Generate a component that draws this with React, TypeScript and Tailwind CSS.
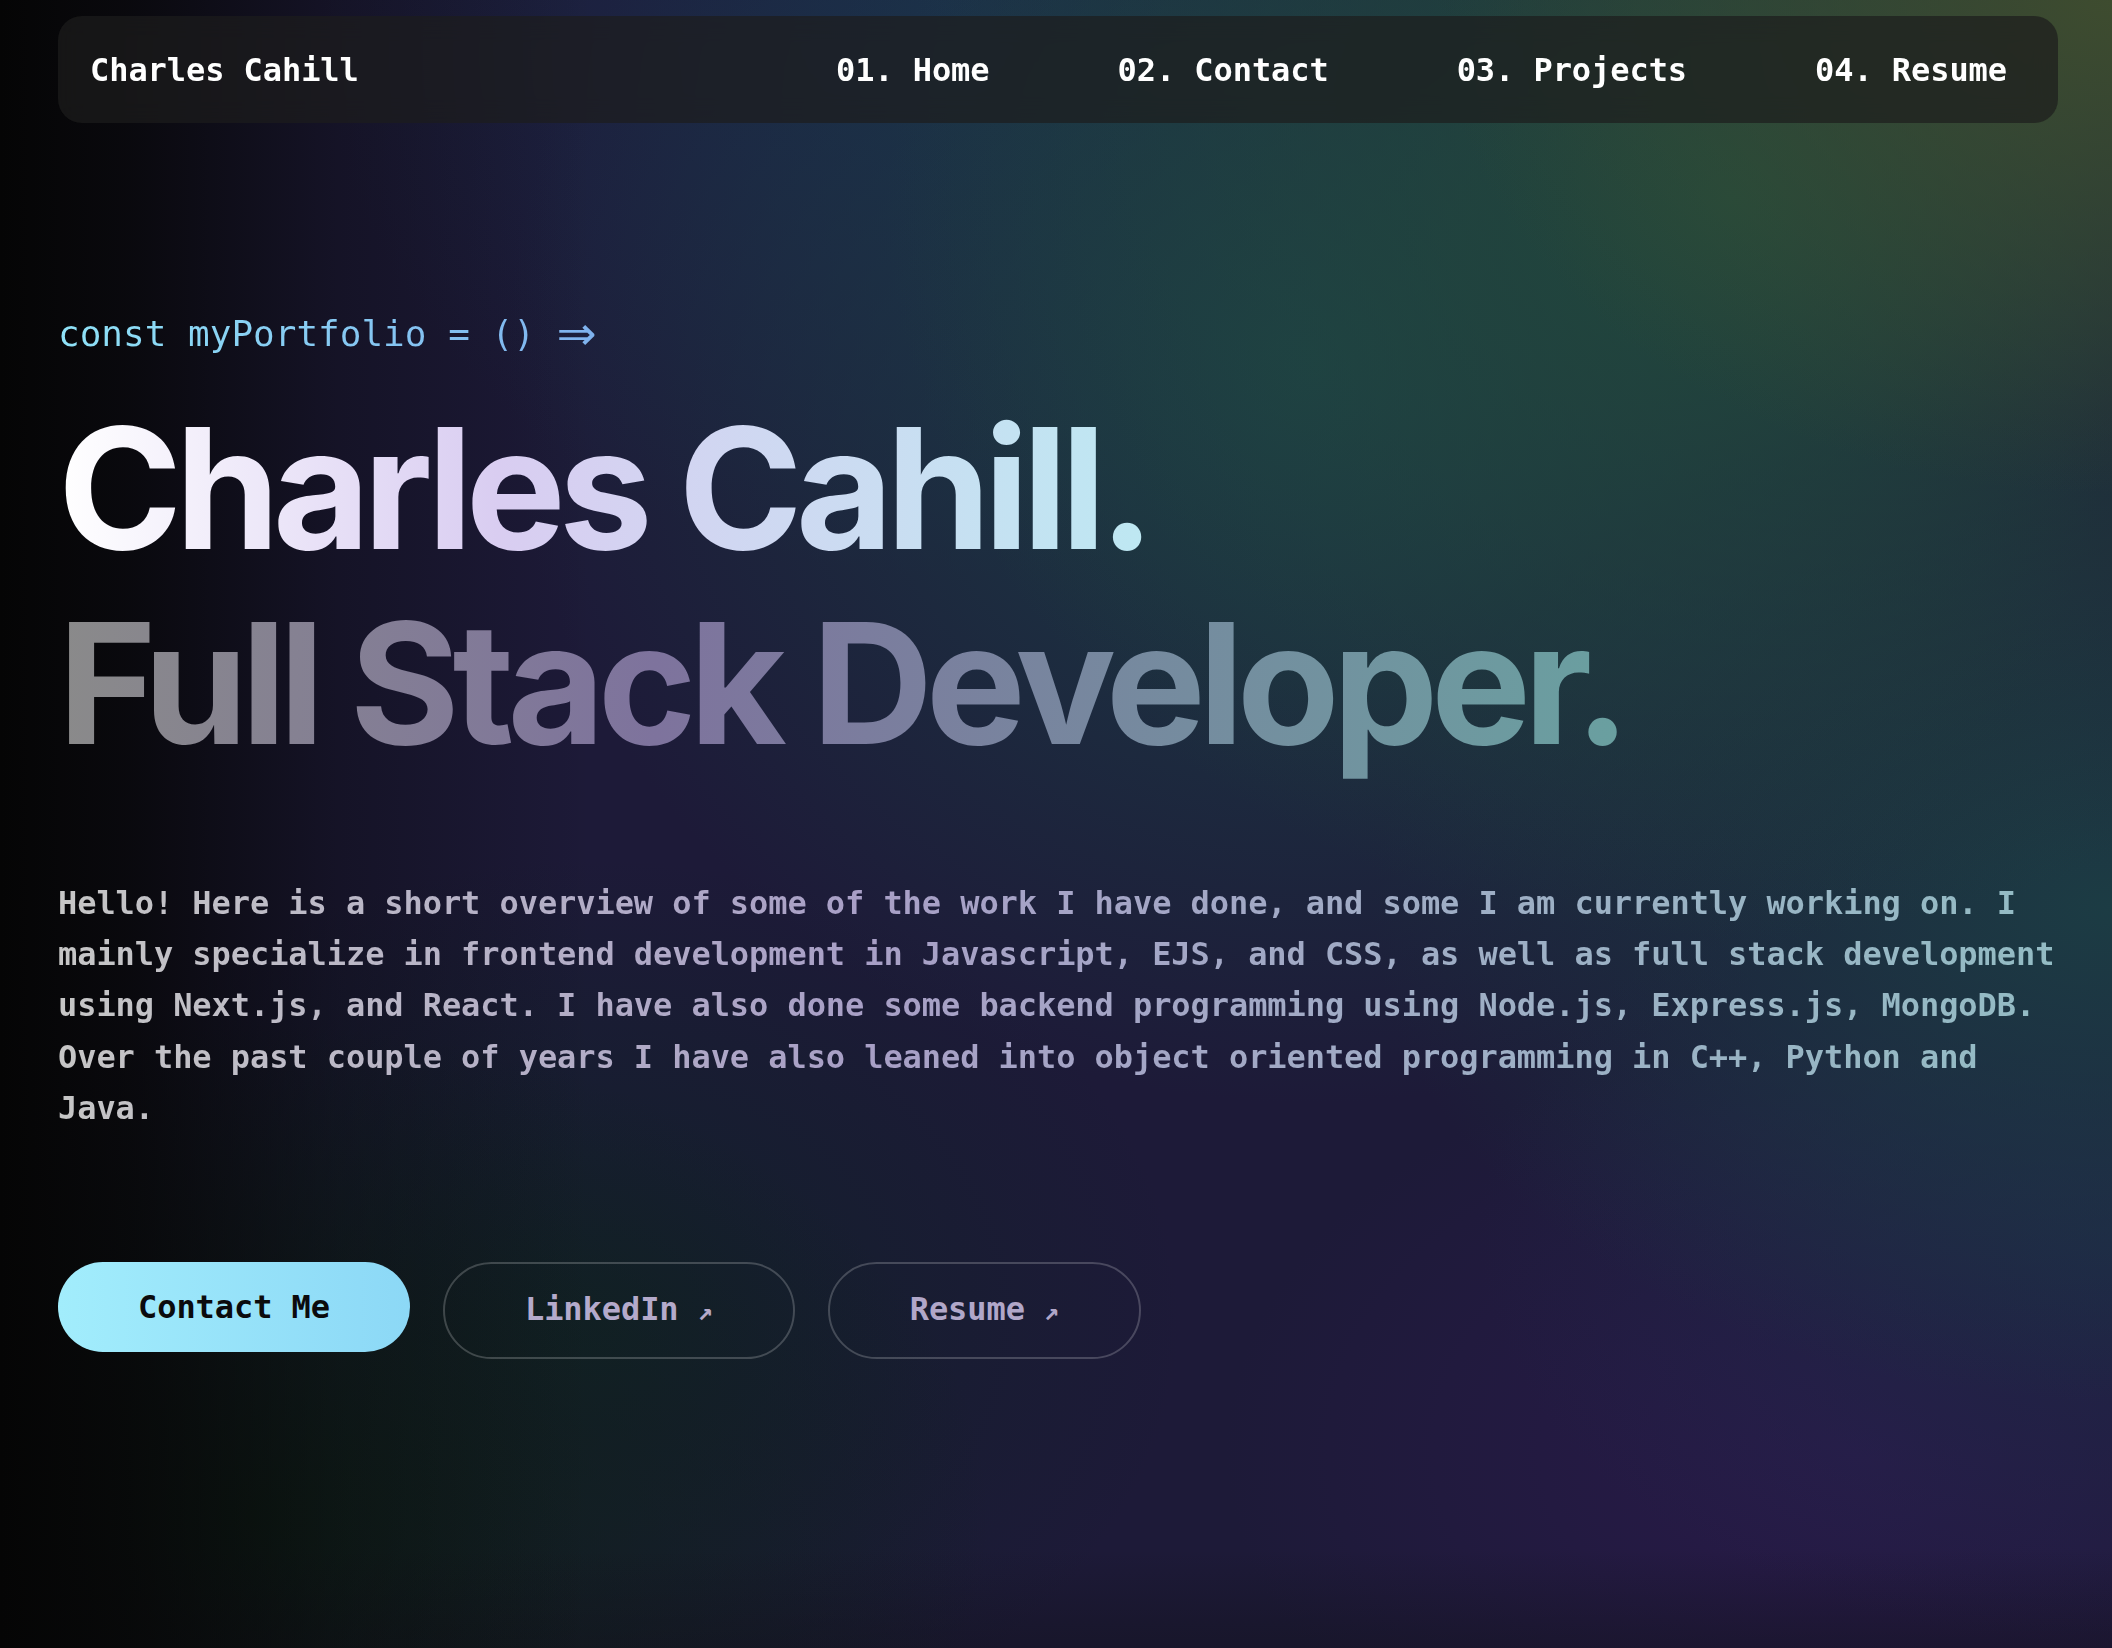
import React from "react";

const mono = "font-['DejaVu_Sans_Mono','Liberation_Mono',monospace]";

function Arrow() {
  return <span className="text-[25px] align-baseline">↗</span>;
}

export default function App() {
  return (
    <div className="relative min-h-screen w-full overflow-hidden bg-[#1d1a38] [background-image:linear-gradient(to_right,#050505_0%,rgba(6,6,6,0.85)_6%,rgba(6,6,6,0.35)_16%,transparent_28%),linear-gradient(to_top,rgba(14,14,18,0.35)_0%,transparent_6%),radial-gradient(ellipse_32%_30%_at_100%_0%,#3e4c2f_0%,transparent_100%),radial-gradient(ellipse_40%_45%_at_82%_12%,#22493c_0%,transparent_100%),radial-gradient(ellipse_38%_45%_at_62%_22%,#1c3d46_0%,transparent_100%),radial-gradient(ellipse_30%_35%_at_45%_0%,#1b2b4a_0%,transparent_100%),radial-gradient(ellipse_35%_30%_at_100%_55%,#1c3c44_0%,transparent_100%),radial-gradient(ellipse_30%_25%_at_100%_75%,#1f2646_0%,transparent_100%),radial-gradient(ellipse_35%_30%_at_12%_92%,#0f1f19_0%,transparent_100%),radial-gradient(ellipse_28%_28%_at_28%_80%,#12202a_0%,transparent_100%),radial-gradient(ellipse_30%_25%_at_88%_88%,#291a4a_0%,transparent_100%)]">
      <header className="pl-[58px] pr-[54px] pt-[16px]">
        <nav
          className={`flex h-[107px] items-center justify-between rounded-[24px] bg-[#1c1c1c]/70 pl-[32px] pr-[51px] backdrop-blur-md ${mono} text-[32px] font-bold tracking-[-0.07px] text-white`}
        >
          <a href="#" className="leading-none">Charles Cahill</a>
          <div className="flex items-center gap-[128px]">
            <a href="#" className="leading-none">01. Home</a>
            <a href="#" className="leading-none">02. Contact</a>
            <a href="#" className="leading-none">03. Projects</a>
            <a href="#" className="leading-none">04. Resume</a>
          </div>
        </nav>
      </header>

      <main className="pl-[58px] pr-[50px] pt-[183px] pb-[200px]">
        <div className={`${mono} text-[36px] leading-[55px]`}>
          <span className="inline-flex items-center bg-linear-to-r from-[#8fe2f7] to-[#7fb2ee] bg-clip-text text-transparent">
            <span className="whitespace-pre">const myPortfolio = () </span>
            <span className="inline-block font-['DejaVu_Sans',sans-serif] text-[48px] leading-[55px]">⇒</span>
          </span>
        </div>

        <h1 className="mt-[30px] font-['Inter',sans-serif] text-[168px] font-bold leading-[195px] tracking-[-0.042em]">
          <span className="block w-fit bg-linear-to-r from-white via-[#d9cdf1] via-40% to-[#bde8f2] bg-clip-text pr-2 text-transparent">
            Charles Cahill.
          </span>
          <span className="block w-fit bg-linear-to-r from-[#8a8a8a] via-[#7e739d] via-38% to-[#69a0a0] bg-clip-text pr-2 tracking-[-0.0436em] text-transparent">
            Full Stack Developer.
          </span>
        </h1>

        <p
          className={`mt-[97px] ${mono} bg-linear-to-r from-[#c6c6c6] via-[#a89fc6] via-40% to-[#93bcc4] bg-clip-text text-[32px] font-bold leading-[51.2px] tracking-[-0.07px] text-transparent`}
        >
          Hello! Here is a short overview of some of the work I have done, and some I am currently working on. I mainly specialize in frontend development in Javascript, EJS, and CSS, as well as full stack development using Next.js, and React. I have also done some backend programming using Node.js, Express.js, MongoDB. Over the past couple of years I have also leaned into object oriented programming in C++, Python and Java.
        </p>

        <div className={`mt-[128px] flex items-start gap-[33px] ${mono} text-[32px] font-bold leading-[48px] tracking-[-0.07px]`}>
          <a
            href="#"
            className="rounded-full bg-linear-to-r from-[#a2edfc] to-[#8cd8f6] px-[80px] py-[21px] text-[#0b0b0d]"
          >
            Contact Me
          </a>
          <a
            href="#"
            className="rounded-full border-2 border-white/20 px-[80px] py-[21px] text-[#b4aacb]"
          >
            LinkedIn <Arrow />
          </a>
          <a
            href="#"
            className="rounded-full border-2 border-white/20 px-[80px] py-[21px] text-[#b1a7c9]"
          >
            Resume <Arrow />
          </a>
        </div>
      </main>
    </div>
  );
}
